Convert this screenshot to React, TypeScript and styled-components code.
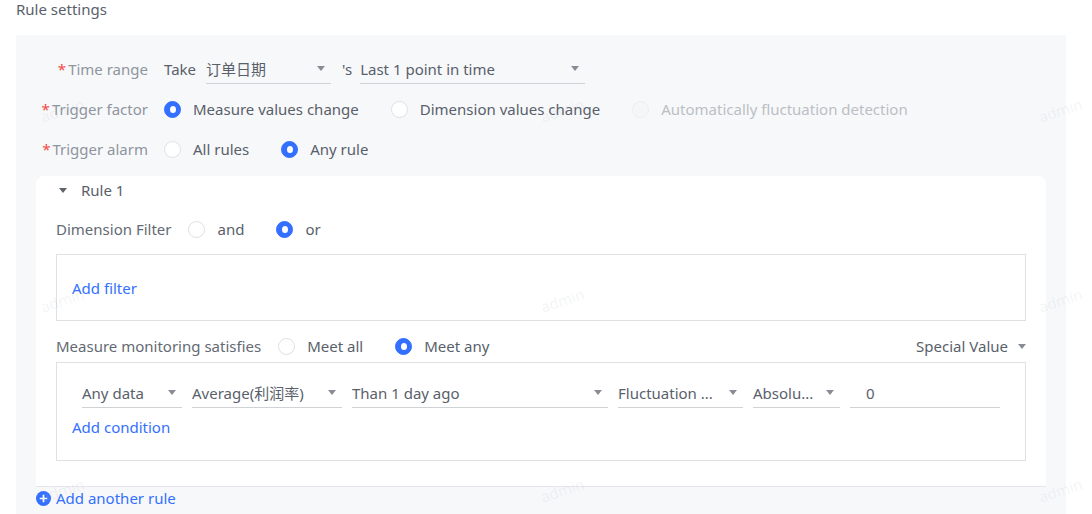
import styled, { createGlobalStyle } from "styled-components";

const blue = "#3370ff";

const GlobalStyle = createGlobalStyle`
    html, body {
        margin: 0;
        padding: 0;
        background: #ffffff;
        font-family: "Noto Sans", "Noto Sans CJK SC", sans-serif;
        font-size: 15px;
        color: #646a73;
    }
`;

const Page = styled.div`
    position: relative;
    width: 1092px;
    height: 514px;
    overflow: hidden;
    padding: 0 26px 0 16px;
    box-sizing: border-box;
`;

const Title = styled.div`
    height: 35px;
    line-height: 19px;
    color: #595f6b;
`;

const Panel = styled.div`
    background: #f7f8fa;
    padding: 24px 20px 0 20px;
    height: 479px;
    box-sizing: border-box;
    display: flex;
    flex-direction: column;
`;

const FormRow = styled.div<{ first?: boolean }>`
    display: flex;
    align-items: center;
    height: 40px;
    margin-top: ${(p) => (p.first ? "-10px" : "0")};
`;

const Label = styled.div`
    width: 128px;
    text-align: right;
    padding-right: 16px;
    color: #8f959e;
    flex-shrink: 0;
    box-sizing: border-box;
    white-space: nowrap;
    &::before {
        content: "*";
        color: #f54a45;
        margin-right: 2px;
    }
`;

const Text = styled.span<{ ml?: number }>`
    color: #595f6b;
    margin-left: ${(p) => p.ml ?? 0}px;
`;

const Select = styled.div<{ w: number; ml?: number; pl?: number }>`
    width: ${(p) => p.w}px;
    margin-left: ${(p) => p.ml ?? 0}px;
    padding-left: ${(p) => p.pl ?? 0}px;
    height: 30px;
    display: flex;
    align-items: center;
    justify-content: space-between;
    border-bottom: 1px solid #d0d3d6;
    box-sizing: border-box;
    color: #595f6b;
    white-space: nowrap;
    flex-shrink: 0;
`;

const Caret = styled.span`
    width: 0;
    height: 0;
    border-left: 4px solid transparent;
    border-right: 4px solid transparent;
    border-top: 5px solid #888d95;
    margin-right: 6px;
    flex-shrink: 0;
`;

const RadioGroup = styled.div`
    display: flex;
    align-items: center;
`;

const RadioItem = styled.label<{ gap: number; disabled?: boolean }>`
    display: flex;
    align-items: center;
    margin-right: ${(p) => p.gap}px;
    color: ${(p) => (p.disabled ? "#bbbfc4" : "#595f6b")};
    white-space: nowrap;
`;

const RadioCircle = styled.span<{ checked?: boolean; disabled?: boolean }>`
    width: 17px;
    height: 17px;
    border-radius: 50%;
    box-sizing: border-box;
    margin-right: 12px;
    flex-shrink: 0;
    background: ${(p) => (p.checked ? blue : p.disabled ? "#f5f6f7" : "#fff")};
    border: 1px solid ${(p) => (p.checked ? blue : p.disabled ? "#eceef0" : "#dee0e3")};
    display: flex;
    align-items: center;
    justify-content: center;
    &::after {
        content: "";
        display: ${(p) => (p.checked ? "block" : "none")};
        width: 6px;
        height: 7px;
        border-radius: 50%;
        background: #fff;
    }
`;

const Card = styled.div`
    background: #fff;
    border-radius: 8px 8px 0 0;
    border-bottom: 1px solid #e4e6e9;
    padding: 0 20px 25px 20px;
    margin-top: 7px;
    display: flex;
    flex-direction: column;
`;

const RuleHead = styled.div`
    display: flex;
    align-items: center;
    height: 28px;
    padding-left: 3px;
    color: #595f6b;
`;

const HeadCaret = styled(Caret)`
    margin-right: 14px;
    border-top-color: #5f646b;
`;

const SubRow = styled.div`
    display: flex;
    align-items: center;
    height: 50px;
`;

const SubLabel = styled.span`
    color: #646a73;
    margin-right: 17px;
    white-space: nowrap;
`;

const Box = styled.div<{ h: number }>`
    border: 1px solid #dee0e3;
    height: ${(p) => p.h}px;
    box-sizing: border-box;
    padding: 0 15px;
    display: flex;
    flex-direction: column;
`;

const Link = styled.span`
    color: ${blue};
    cursor: pointer;
`;

const FilterBox = styled(Box)`
    justify-content: center;
`;

const MeasureRow = styled.div`
    display: flex;
    align-items: center;
    justify-content: space-between;
    height: 30px;
    margin: 10px 0 1px 0;
`;

const Special = styled.div`
    display: flex;
    align-items: center;
    color: #595f6b;
    gap: 10px;
`;

const ConditionRow = styled.div`
    display: flex;
    align-items: center;
    gap: 10px;
    padding: 15px 0 0 10px;
`;

const ConditionLink = styled.div`
    padding-top: 9px;
`;

const AddRule = styled.div`
    display: flex;
    align-items: center;
    gap: 5px;
    height: 22px;
    color: ${blue};
`;

const Mark = styled.span<{ x: number; y: number }>`
    position: absolute;
    left: ${(p) => p.x}px;
    top: ${(p) => p.y}px;
    transform: rotate(-18deg);
    color: rgba(180, 185, 195, 0.16);
    font-size: 15px;
    pointer-events: none;
`;

const PlusIcon = () => (
    <svg width="15" height="15" viewBox="0 0 14 14">
        <circle cx="7" cy="7" r="7" fill={blue} />
        <path d="M7 3.5v7M3.5 7h7" stroke="#fff" strokeWidth="1.6" />
    </svg>
);

const Radio = ({ label, checked, disabled, gap }: { label: string; checked?: boolean; disabled?: boolean; gap: number }) => (
    <RadioItem gap={gap} disabled={disabled}>
        <RadioCircle checked={checked} disabled={disabled} />
        {label}
    </RadioItem>
);

const marks = [
    [40, 100], [540, 100], [1038, 100],
    [40, 290], [540, 290], [1038, 290],
    [40, 480], [540, 480], [1038, 480],
];

export default function App() {
    return (
        <>
            <GlobalStyle />
            <Page>
                <Title>Rule settings</Title>
                <Panel>
                    <FormRow first>
                        <Label>Time range</Label>
                        <Text>Take</Text>
                        <Select w={125} ml={10}>订单日期<Caret /></Select>
                        <Text ml={11}>'s</Text>
                        <Select w={225} ml={8}>Last 1 point in time<Caret /></Select>
                    </FormRow>
                    <FormRow>
                        <Label>Trigger factor</Label>
                        <RadioGroup>
                            <Radio label="Measure values change" checked gap={32} />
                            <Radio label="Dimension values change" gap={32} />
                            <Radio label="Automatically fluctuation detection" disabled gap={0} />
                        </RadioGroup>
                    </FormRow>
                    <FormRow>
                        <Label>Trigger alarm</Label>
                        <RadioGroup>
                            <Radio label="All rules" gap={32} />
                            <Radio label="Any rule" checked gap={0} />
                        </RadioGroup>
                    </FormRow>
                    <Card>
                        <RuleHead>
                            <HeadCaret />
                            Rule 1
                        </RuleHead>
                        <SubRow>
                            <SubLabel>Dimension Filter</SubLabel>
                            <Radio label="and" gap={32} />
                            <Radio label="or" checked gap={0} />
                        </SubRow>
                        <FilterBox h={67}>
                            <Link>Add filter</Link>
                        </FilterBox>
                        <MeasureRow>
                            <RadioGroup>
                                <SubLabel>Measure monitoring satisfies</SubLabel>
                                <Radio label="Meet all" gap={32} />
                                <Radio label="Meet any" checked gap={0} />
                            </RadioGroup>
                            <Special>
                                Special Value
                                <Caret style={{ marginRight: 0 }} />
                            </Special>
                        </MeasureRow>
                        <Box h={99}>
                            <ConditionRow>
                                <Select w={100}>Any data<Caret /></Select>
                                <Select w={150}>Average(利润率)<Caret /></Select>
                                <Select w={256}>Than 1 day ago<Caret /></Select>
                                <Select w={125}>Fluctuation ...<Caret /></Select>
                                <Select w={87}>Absolu...<Caret /></Select>
                                <Select w={150} pl={16}>0</Select>
                            </ConditionRow>
                            <ConditionLink>
                                <Link>Add condition</Link>
                            </ConditionLink>
                        </Box>
                    </Card>
                    <AddRule>
                        <PlusIcon />
                        Add another rule
                    </AddRule>
                </Panel>
                {marks.map(([x, y]) => (
                    <Mark key={`${x}-${y}`} x={x} y={y}>admin</Mark>
                ))}
            </Page>
        </>
    );
}
